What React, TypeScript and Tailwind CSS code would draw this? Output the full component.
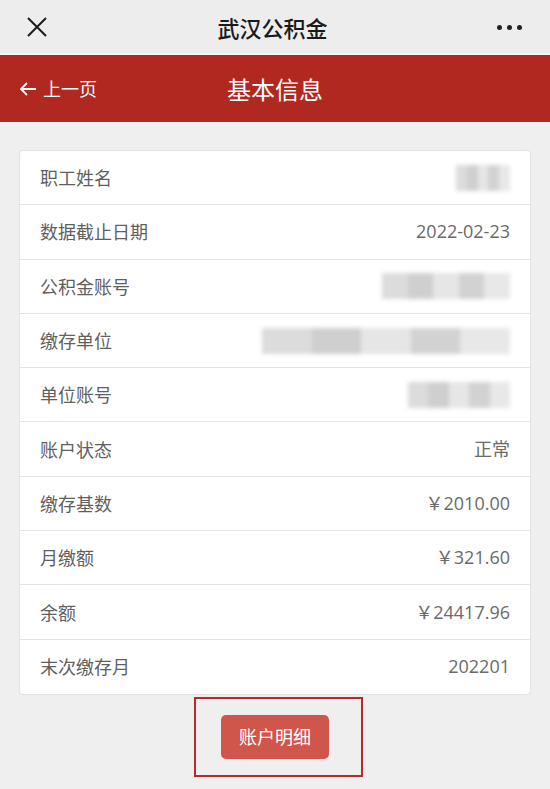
import type { ReactNode } from 'react';

type Row = { label: string; value?: string; blur?: ReactNode };

function Blur({ w }: { w: number }) {
  return (
    <div className="flex h-[26px] blur-[2px]" style={{ width: w }}>
      <div className="flex-1 bg-[#dcdcdc]" />
      <div className="flex-1 bg-[#cfcfcf]" />
      <div className="flex-1 bg-[#e6e6e6]" />
      <div className="flex-1 bg-[#d2d2d2]" />
      <div className="flex-1 bg-[#e8e8e8]" />
    </div>
  );
}

const rows: Row[] = [
  { label: '职工姓名', blur: <Blur w={54} /> },
  { label: '数据截止日期', value: '2022-02-23' },
  { label: '公积金账号', blur: <Blur w={128} /> },
  { label: '缴存单位', blur: <Blur w={248} /> },
  { label: '单位账号', blur: <Blur w={102} /> },
  { label: '账户状态', value: '正常' },
  { label: '缴存基数', value: '￥2010.00' },
  { label: '月缴额', value: '￥321.60' },
  { label: '余额', value: '￥24417.96' },
  { label: '末次缴存月', value: '202201' },
];

export default function App() {
  return (
    <div
      className="w-[550px] h-[789px] bg-[#efefef] overflow-hidden"
      style={{ fontFamily: '"Noto Sans CJK SC", "Noto Sans", sans-serif' }}
    >
      <div className="h-[55px] bg-[#ededed] border-b border-[#f7f7f7] flex items-center justify-between px-[26px]">
        <svg width="22" height="22" viewBox="0 0 22 22" fill="none" stroke="#1a1a1a" strokeWidth="2">
          <path d="M2 2 L20 20 M20 2 L2 20" />
        </svg>
        <span className="text-[22px] font-medium text-[#1a1a1a]">武汉公积金</span>
        <div className="flex gap-[5px] pr-[2px]">
          <span className="w-[5px] h-[5px] rounded-full bg-[#222]" />
          <span className="w-[5px] h-[5px] rounded-full bg-[#222]" />
          <span className="w-[5px] h-[5px] rounded-full bg-[#222]" />
        </div>
      </div>

      <div className="h-[67px] bg-[#b02820] relative flex items-center justify-center">
        <div className="absolute left-[19px] flex items-center gap-[6px] text-white text-[18px]">
          <svg width="18" height="14" viewBox="0 0 18 14" fill="none" stroke="white" strokeWidth="1.8">
            <path d="M17 7 H2 M8 1 L2 7 L8 13" />
          </svg>
          <span>上一页</span>
        </div>
        <span className="text-white text-[24px]">基本信息</span>
      </div>

      <div className="px-[19px] pt-[28px]">
        <div className="bg-white rounded-[4px] border border-[#e2e2e2]">
          {rows.map((r, i) => (
            <div
              key={r.label}
              className={`h-[54.3px] flex items-center justify-between pl-[20px] pr-[20px] ${
                i < rows.length - 1 ? 'border-b border-[#e4e4e4]' : ''
              }`}
            >
              <span className="text-[18px] text-[#5f5f5f]">{r.label}</span>
              {r.value ? (
                <span
                  className="text-[18px] text-[#6a6a6a]"
                  style={{ fontFamily: '"Open Sans", "Noto Sans CJK SC", sans-serif' }}
                >
                  {r.value}
                </span>
              ) : (
                r.blur
              )}
            </div>
          ))}
        </div>
      </div>

      <div className="flex justify-center pt-[2px] pl-[6px]">
        <div className="border-2 border-[#b52a2a] w-[169px] h-[80px] flex items-center justify-center pr-[6px]">
          <button className="w-[108px] h-[44px] rounded-[5px] bg-[#d0554a] text-white text-[18px]">账户明细</button>
        </div>
      </div>
    </div>
  );
}
